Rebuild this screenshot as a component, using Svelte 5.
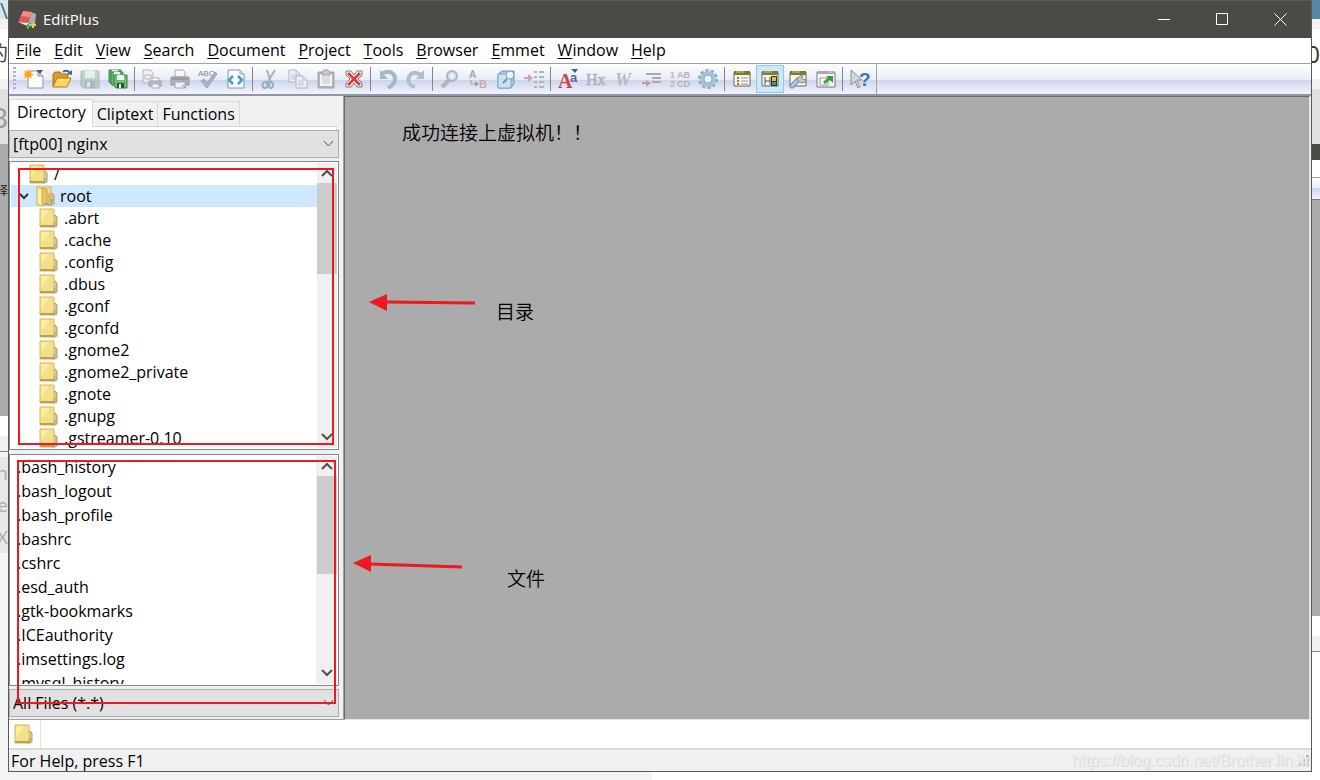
<style>
	:global(body) {
		margin: 0;
	}
	.desktop {
		display: grid;
		grid-template-columns: 8px 1fr 8px;
		grid-template-rows: 1fr 8px;
		height: 100vh;
		overflow: hidden;
		background: linear-gradient(to right, #f5f5f5 652px, #fff 652px);
		font-family: "Open Sans", "Noto Sans CJK SC", sans-serif;
		font-size: 16px;
		line-height: 20px;
		color: #000;
	}
	button,
	select {
		font: inherit;
		color: inherit;
		margin: 0;
		padding: 0;
		border: 0;
		background: transparent;
	}
	svg {
		display: block;
	}
	ul {
		list-style: none;
		margin: 0;
		padding: 0;
	}

	/* windows lying behind the editor */
	.behind {
		display: flex;
		flex-direction: column;
		overflow: hidden;
	}
	.behind div {
		display: flex;
		flex: none;
		align-items: center;
		justify-content: flex-end;
		box-sizing: border-box;
		overflow: hidden;
		white-space: nowrap;
	}

	.window {
		position: relative;
		display: flex;
		flex-direction: column;
		min-height: 0;
		border: 1px solid #5a5a58;
		overflow: hidden;
		background: #fff;
	}
	.titlebar {
		display: flex;
		align-items: center;
		height: 37px;
		padding: 0 2px 0 9px;
		background: #4b4a47;
		color: #fff;
	}
	.titlebar h1 {
		flex: 1;
		margin: 0 0 2px 5px;
		font-size: 15px;
		font-weight: 400;
	}
	.titlebar button {
		display: grid;
		place-items: center;
		width: 58px;
		height: 37px;
	}
	.menu {
		display: flex;
		align-items: center;
		gap: 1px;
		height: 23px;
		padding: 0 1px 2px;
		border-bottom: 1px solid #a0a0a0;
	}
	.menu button {
		padding: 0 6px;
	}
	.menu u {
		text-underline-offset: 2px;
	}
	.toolbar {
		display: flex;
		align-items: center;
		height: 30px;
		border-bottom: 2px solid #9294a5;
		background: linear-gradient(#fff, #e6ebf6 16px, #ced5ec 16px, #f1f3fd);
	}
	.toolbar button {
		display: grid;
		place-items: center;
		box-sizing: border-box;
		width: 28px;
		height: 28px;
	}
	.toolbar button.active {
		border: 1px solid #90c8f6;
		background: #cce8ff;
	}
	.grip {
		width: 3px;
		height: 24px;
		margin: 0 4px;
		background: repeating-linear-gradient(#b2b4bd 0 2px, transparent 2px 4px);
	}
	.sep {
		width: 1px;
		height: 24px;
		margin: 0 3px 0 2px;
		background: #84868f;
	}
	.end {
		align-self: stretch;
		width: 1px;
		margin-left: 2px;
		background: #a0a0a0;
	}

	.body {
		display: flex;
		flex: 1;
		min-height: 0;
		background: #f0f0f0;
	}
	.sidebar {
		display: flex;
		flex-direction: column;
		box-sizing: border-box;
		width: 335px;
		padding: 3px 4px 2px 0;
		border-right: 1px solid #a0a0a0;
		border-bottom: 1px solid #a0a0a0;
	}
	.tabs {
		display: flex;
		align-items: flex-end;
		height: 28px;
		margin-right: 2px;
		background: linear-gradient(#d9d9d9, #d9d9d9) bottom / 100% 1px no-repeat;
	}
	.tabs button {
		box-sizing: border-box;
		height: 26px;
		padding: 0 4px;
		border: 1px solid #d9d9d9;
		border-left: 0;
	}
	.tabs button.current {
		height: 28px;
		padding: 0 6px 4px 7px;
		border-left: 1px solid #d9d9d9;
		border-bottom: 0;
		background: #fff;
	}
	.pane-edge {
		height: 3px;
		margin-right: 2px;
		border-right: 1px solid #d9d9d9;
		background: #fff;
	}
	.combo {
		display: grid;
		flex: none;
		height: 28px;
	}
	.combo select,
	.combo svg {
		grid-area: 1 / 1;
	}
	.combo select {
		appearance: none;
		box-sizing: border-box;
		width: 100%;
		padding: 0 3px;
		border: 1px solid #adadad;
		background: #e1e1e1;
	}
	.combo svg {
		place-self: center end;
		margin-right: 5px;
		pointer-events: none;
	}
	.list {
		display: flex;
		min-height: 0;
		padding: 1px;
		border: 1px solid #828790;
		background: #fff;
		overflow: hidden;
	}
	.list ul {
		flex: 1;
		overflow: hidden;
	}
	.tree {
		flex: 5 1 0;
		margin: 3px 0 4px;
	}
	.files {
		flex: 4 1 0;
		margin-bottom: 3px;
	}
	.files ul {
		border-right: 1px solid #e5f1fb;
	}
	.tree button {
		display: flex;
		align-items: center;
		gap: 6px;
		width: 100%;
		height: 22px;
		padding-left: 27px;
	}
	.tree .top button {
		padding-left: 17px;
	}
	.tree .selected button {
		gap: 5px;
		padding-left: 7px;
		background: #cde8ff;
	}
	.files button {
		display: block;
		height: 24px;
		padding: 0 0 2px 6px;
	}
	.scroll {
		display: flex;
		flex-direction: column;
		flex: none;
		width: 20px;
		background: #f0f0f0;
	}
	.scroll svg {
		flex: none;
	}
	.track {
		flex: 1;
	}
	.thumb {
		background: #cdcdcd;
	}
	.workspace {
		flex: 1;
		margin-right: 1px;
		border: 1px solid #e3e3e3;
		border-top-color: #696969;
		border-left-color: #696969;
		background: #ababab;
	}
	.docs {
		display: flex;
		flex: none;
		height: 28px;
		border-bottom: 2px solid #d9d9d9;
	}
	.docs button {
		padding: 0 7px 0 4px;
		border-right: 1px solid #e3e3e3;
	}
	.status {
		display: flex;
		flex: none;
		align-items: center;
		justify-content: space-between;
		height: 21px;
		padding: 0 2px;
		background: #f0f0f0;
	}

	/* red markup drawn over the window */
	.box {
		position: absolute;
		box-sizing: border-box;
		border: 2px solid #ed1820;
		pointer-events: none;
	}
	.directories {
		left: 9px;
		top: 167px;
		width: 316px;
		height: 277px;
	}
	.filelist {
		left: 8px;
		top: 459px;
		width: 319px;
		height: 244px;
	}
	.arrow {
		position: absolute;
		pointer-events: none;
	}
	.note {
		position: absolute;
		margin: 0;
		font: 19px/28px "Noto Sans CJK SC", sans-serif;
		font-weight: 350;
		white-space: nowrap;
	}
	.watermark {
		position: absolute;
		left: 1063px;
		bottom: 0;
		font: 16px/20px "Liberation Sans", sans-serif;
		color: #ececec;
		text-shadow: 1px 1px 0 #d8d8d8;
		white-space: nowrap;
	}
</style>
<script>
	const menus = ["File", "Edit", "View", "Search", "Document", "Project", "Tools", "Browser", "Emmet", "Window", "Help"];
	const tabs = ["Directory", "Cliptext", "Functions"];
	const folders = [".abrt", ".cache", ".config", ".dbus", ".gconf", ".gconfd", ".gnome2", ".gnome2_private", ".gnote", ".gnupg", ".gstreamer-0.10"];
	const files = [".bash_history", ".bash_logout", ".bash_profile", ".bashrc", ".cshrc", ".esd_auth", ".gtk-bookmarks", ".ICEauthority", ".imsettings.log", ".mysql_history"];

	let tab = "Directory";
	let panel = "Directory window";

	const page = (x, y) => `<path d="M${x} ${y}h7l4 4v8h-11z" fill="#eef0f5" stroke="#b3b7c2"/><path d="M${x + 7} ${y}v4h4M${x + 2} ${y + 5}h6M${x + 2} ${y + 7}h6M${x + 2} ${y + 9}h6" fill="none" stroke="#b9c7d8"/>`;
	const frame = `<path d="M2 3h16v14H2z" fill="#f5f6ef" stroke="#6b6b4e"/><path d="M2 2h16v4H2z" fill="#7c7c34"/><path d="M4 3h8" stroke="#c6c67c"/>`;
	const greenDisk = (x, y) => `<path d="M${x} ${y}h12v13h-11l-1-1z" fill="#62b46a" stroke="#3b8c48"/><path d="M${x + 3} ${y}h6v5h-6z" fill="#e6f4e5"/>`;

	// every drawing fills a 20 by 20 box
	const tools = [
		["New", `<path d="M4 2h10l5 5v12H4z" fill="#fbfbfa" stroke="#98979a"/><path d="M14 2v5h5" fill="#dadada" stroke="#929292"/><path d="M12 1h7l-3 4z" fill="#405b84"/><path d="M4 0l1.2 2.5L8 1.500 7.200 4.200 10 5.500 7.200 6.800 8 9.500 5.200 8.300 4 11 2.800 8.300 0 9.500 1 6.800-1 5.500 1 4.200 0 1.500 2.800 2.500z" fill="#ffb52e"/><circle cx="4.500" cy="5.500" r="2.500" fill="#ff9b20"/>`],
		["Open", `<path d="M1 18V5l2-2h5l2 2h6v4" fill="#d99b27" stroke="#a4701a"/><path d="M1 18l4-9h14l-4 9z" fill="#ffd65c" stroke="#b47d1c"/><path d="M6 11h11" stroke="#fff0a5"/><path d="M11 3q4-3 7 1" fill="none" stroke="#4c6688" stroke-width="2"/><path d="M15 5l5 1V1z" fill="#4c6688"/>`],
		["Save", `<g opacity=".6"><path d="M1 2h18v17H3l-2-2z" fill="#a4bdb0" stroke="#879c96"/><path d="M5 2h10v7H5z" fill="#e4ece9"/><path d="M5 12h10v7H5z" fill="#889e98"/><path d="M7 13h3v5H7z" fill="#e8eeeb"/></g>`],
		["Save All", `${greenDisk(1, 1)}${greenDisk(3, 3)}<path d="M6 6h13v13H8l-2-2z" fill="#6cbd70" stroke="#3b8142"/><path d="M9 6h7v5H9z" fill="#edf8ea"/><path d="M9 14h7v5H9z" fill="#394e40"/><path d="M11 15h2v4h-2z" fill="#e9efe8"/>`],
		null,
		["Print Preview", `<g opacity=".8"><path d="M1 1h8l2 3v10H1z" fill="#eef0f5" stroke="#a8aab4"/><path d="M3 6h6v4H3z" fill="none" stroke="#a8aab4"/><path d="M10 9h7v4h-7z" fill="#fff" stroke="#a0a4b0"/><path d="M7 12h13v5H7z" fill="#b0b3bd" stroke="#969aa5"/><path d="M10 15h7v4h-7z" fill="#f7f8fb" stroke="#a0a4b0"/></g>`],
		["Print", `<path d="M5 1h8l2 2v5H5z" fill="#f6f7fa" stroke="#aaa"/><path d="M1 8h18v8H1z" fill="#b0b0b5" stroke="#96969d"/><path d="M2 10h16" stroke="#85858e"/><path d="M5 13h10v6H5z" fill="#eef1f5" stroke="#a8a8ad"/><path d="M12 16l4 3" stroke="#8c8c91"/>`],
		["Spell Check", `<text x="0" y="7" font-family="Liberation Sans" font-size="8" fill="#858792">ABC</text><path d="M3 12l3-2 3 4 8-11 2 2L9 19z" fill="#a8b2cb" stroke="#98a2ba"/>`],
		["View in Browser", `<path d="M2 1h12l4 4v14H2z" fill="#fbfcfe" stroke="#9194a0"/><path d="M14 1v4h4" fill="#ddd" stroke="#a9a9ae"/><path d="M7 7l-4 4 4 4M12 7l4 4-4 4" fill="none" stroke="#3c9be3" stroke-width="2.500"/>`],
		null,
		["Cut", `<g fill="none" stroke-width="2"><path d="M15 1L7 14M7 1l4 13" stroke="#a9b2bb"/><ellipse cx="5" cy="16" rx="2.500" ry="3" stroke="#93afca"/><ellipse cx="11" cy="16" rx="2" ry="3" stroke="#93afca"/></g>`],
		["Copy", page(1, 1) + page(8, 7)],
		["Paste", `<path d="M2 3h16v16H2z" fill="#b4b4b9" stroke="#a6a6ac"/><path d="M4 5h12v12H4z" fill="#f2f3f6"/><path d="M6 3l2-2h4l2 2v3H6z" fill="#c8cad0" stroke="#a0a2aa"/><path d="M6 8h8M6 10h8M6 12h8M6 14h8" stroke="#c6c8d0"/>`],
		["Delete", `<path d="M2 2h5l3 4 3-4h5v4l-4 4 4 4v4h-5l-3-4-3 4H2v-4l4-4-4-4z" fill="#fff" stroke="#8f7070"/><path d="M4 4l12 12M16 4L4 16" stroke="#d94141" stroke-width="3"/>`],
		null,
		["Undo", `<path d="M3 5q9-5 13 1c3 6-1 10-6 13" fill="none" stroke="#a3b7cb" stroke-width="4"/><path d="M2 1v9h8z" fill="#a3b7cb"/>`],
		["Redo", `<path d="M16 6Q6 1 3 8c-2 6 2 9 6 10" fill="none" stroke="#aebfca" stroke-width="4"/><path d="M18 1v9h-8z" fill="#aebfca"/>`],
		null,
		["Find", `<path d="M2 18l7-7" stroke="#b0b4bb" stroke-width="4"/><circle cx="12" cy="7" r="5" fill="#d7e0ef" stroke="#aab5c5" stroke-width="2"/><circle cx="12" cy="7" r="2" fill="#f4f7fc"/>`],
		["Replace", `<text x="1" y="9" font-family="Liberation Sans" font-size="10" font-weight="700" fill="#a5a7b2">A</text><text x="11" y="19" font-family="Liberation Sans" font-size="11" font-weight="700" fill="#c9abb0">B</text><path d="M3 11v4h6" fill="none" stroke="#9d9faa"/><path d="M7 12l4 3-4 3z" fill="#9d9faa"/>`],
		["Find in Files", `<path d="M2 5l4-3h12v13l-3 4H2z" fill="#a9c9e9" stroke="#6c94c3"/><path d="M2 5h13v14H2z" fill="#c8e0f5" stroke="#7ea7d1"/><path d="M7 14l4-4" stroke="#818d9d" stroke-width="2"/><circle cx="14" cy="6" r="4" fill="#e7f3fc" stroke="#8a9cae"/>`],
		["Go to Line", `<path d="M0 9h6" stroke="#d1a6aa" stroke-width="2"/><path d="M4 5l5 4-5 4z" fill="#d1a6aa"/><path d="M10 3h3M10 8h3M10 13h3M10 18h3M15 3h5M15 8h5M15 13h5M15 18h5" stroke="#b2b5bf" stroke-width="2"/>`],
		null,
		["Font", `<text x="0" y="19" font-family="Liberation Serif" font-size="20" font-weight="700" fill="#c44949">A</text><text x="12" y="13" font-family="Liberation Sans" font-size="13" font-weight="700" fill="#655db0">a</text><path d="M13 0h7l-3 4z" fill="#405b84"/>`],
		["Hex Viewer", `<text x="0" y="16" font-family="Liberation Serif" font-size="16" fill="#afb2bb" stroke="#afb2bb" stroke-width=".5">Hx</text>`],
		["Word Wrap", `<text x="1" y="17" font-family="Liberation Serif" font-size="18" font-style="italic" font-weight="700" fill="#b8bac3">W</text>`],
		["Auto Indent", `<path d="M4 5h15M10 9h9M10 13h9" stroke="#a7aab6" stroke-width="2"/><path d="M0 14h5" stroke="#c29ca5" stroke-width="2"/><path d="M4 11l5 3-5 4z" fill="#c29ca5"/>`],
		["Line Number", `<g font-family="Liberation Sans" font-size="9" font-weight="700"><text x="0" y="9" fill="#c8b1b4">1</text><text x="0" y="18" fill="#c8b1b4">2</text><text x="7" y="9" fill="#b0b3bc">AB</text><text x="7" y="18" fill="#b0b3bc">CD</text></g>`],
		["Preferences", `<circle cx="10" cy="10" r="8" fill="none" stroke="#8faabf" stroke-width="4" stroke-dasharray="3 2"/><circle cx="10" cy="10" r="6" fill="none" stroke="#a5c3d7" stroke-width="4"/><circle cx="10" cy="10" r="4" fill="#eff4fa" stroke="#8faabf"/>`],
		null,
		["Cliptext window", `${frame}<path d="M5 9h2M5 12h2M5 15h2" stroke="#cf5b42" stroke-width="2"/><path d="M9 9h7M9 12h7M9 15h7" stroke="#999"/>`],
		["Directory window", `${frame}<path d="M5 8v8M5 12h5M10 8v8" stroke="#4c535c" fill="none"/><path d="M11 7h6v10h-6z" fill="#333"/><path d="M12 8h4v4h-4z" fill="#e7bf1c"/><path d="M12 13h4v3h-4z" fill="#3897b8"/>`],
		["User tools", `${frame}<path d="M4 17l6-6" stroke="#678fbd" stroke-width="5" stroke-linecap="round"/><path d="M4 17l6-6" stroke="#a5c9ed" stroke-width="3" stroke-linecap="round"/><path d="M9 10l4-4 2 1-1 2 2 2 2-1v3l-4 1-3-1z" fill="#c4c5c6" stroke="#87888c"/>`],
		["Full Screen", `<path d="M1 3h18v15H1z" fill="#f6f6f6" stroke="#777"/><path d="M1 2h18v3H1z" fill="#aaa"/><path d="M13 3h5" stroke="#eee" stroke-dasharray="1 1"/><path d="M4 9h8v7H4z" fill="#fff" stroke="#999"/><path d="M8 14l6-5" stroke="#3fa048" stroke-width="3"/><path d="M10 7h7v7z" fill="#2f9a3f"/>`],
		null,
		["Context Help", `<path d="M1 1v15l4-4 3 7 2-1-3-7h5z" fill="#d4d6de" stroke="#8d909b"/><text x="9" y="17" font-family="Liberation Sans" font-size="19" font-weight="700" fill="#3c73c4">?</text>`],
	];

	const left = [
		[19, "#d9e6ec", "\\", "#397793", 22],
		[10, "#f2f2f2"],
		[50, "#fff", "的", "#444", 20],
		[10, "#f2f2f2"],
		[55, "#e1e1e1", "B", "#999", 28],
		[94, "#ababab", "选择", "#222", 12],
		[178, "#ababab"],
		[20, "#fff"],
		[15, "#f0f0f0"],
		[1, "#828790"],
		[5, "#f5f5f5"],
		[32, "#e8e8e8", "n", "#aaa", 19],
		[32, "#e8e8e8", "e", "#aaa", 19],
		[32, "#e8e8e8", "X", "#aaa", 19],
	];
	const right = [
		[19, "#5588a6"],
		[10, "#f2f2f2"],
		[50, "#fff", "0", "#333", 24],
		[10, "#f2f2f2"],
		[55, "#e1e1e1"],
		[16, "#4b4a47"],
		[17, "#fff"],
		[1, "#a0a0a0"],
		[21, "linear-gradient(#fff, #e6ebf6 50%, #ced5ec 50%, #f1f3fd)"],
		[1, "#77798a"],
		[416, "#ababab"],
		[20, "#fff"],
		[15, "#f0f0f0"],
		[1, "#828790"],
		[120, "#fff"],
	];
</script>

{#snippet strip(blocks)}
	{#each blocks as [height, background, text, color, size]}
		<div style="height: {height}px; background: {background}; color: {color}; font-size: {size}px">{text || ""}</div>
	{/each}
{/snippet}

{#snippet folder(open)}
	<svg width="20" height="20" viewBox="0 0 20 20" aria-hidden="true">
		<path d="M14 7h3l2 2v9l-2 1h-3z" fill="#d8c28b" stroke="#ae9c70" />
		<path d="M16 9v8" stroke="#fff6d0" />
		<path d="M16 14h1v4h-1z" fill="#42a5d8" />
		<path d="M2 1h14v18H2z" fill="#f4e08a" stroke="#d5b65f" />
		<path d="M2 18h14" stroke="#c39c4d" stroke-width="2" />
		<path d="M3 2h8L3 13z" fill="#fbef9d" />
		{#if open}
			<path d="M7 2l5 1v14l-5 2z" fill="#e6c763" stroke="#c9a04a" />
			<path d="M2 1l5 2v17l-5-2z" fill="#fff0a3" stroke="#d5b65f" />
			<path d="M13 7h4v11h-4z" fill="#d7ba6d" />
			<path d="M16 13h1v4h-1z" fill="#42a5d8" />
		{/if}
	</svg>
{/snippet}

{#snippet scrollbar(thumb, rest)}
	<div class="scroll">
		<svg width="20" height="20" viewBox="0 0 20 20"><path d="M5 13l5-5 5 5" fill="none" stroke="#505050" stroke-width="2" /></svg>
		<div class="thumb" style="flex: {thumb} 1 0"></div>
		<div class="track" style="flex: {rest} 1 0"></div>
		<svg width="20" height="20" viewBox="0 0 20 20"><path d="M5 6l5 5 5-5" fill="none" stroke="#505050" stroke-width="2" /></svg>
	</div>
{/snippet}

{#snippet chevron()}
	<svg width="11" height="8" viewBox="0 0 11 8"><path d="M1 1l4.500 5L10 1" fill="none" stroke="#555" /></svg>
{/snippet}

<div class="desktop">
	<div class="behind" aria-hidden="true">{@render strip(left)}</div>

	<main class="window">
		<header class="titlebar">
			<svg width="20" height="20" viewBox="0 0 20 20" aria-hidden="true">
				<path d="M13 2l5 2-1 11-7-2z" fill="#a9adb0" />
				<path d="M5 1l9 1-4 11-10-1z" fill="#df5b5b" />
				<path d="M5 1l9 1-2 5-9-1z" fill="#f08a85" />
				<path d="M0 12l10 1 5 3-8-1z" fill="#eeeeeb" />
				<path d="M10 14v5M8 16h5" stroke="#45bc4b" stroke-width="2" />
				<path d="M15 13v5M13 15h5" stroke="#f0d72e" stroke-width="2" />
			</svg>
			<h1>EditPlus</h1>
			<button aria-label="Minimize"><svg width="13" height="13"><path d="M0 6.500h12" stroke="#fff" /></svg></button>
			<button aria-label="Maximize"><svg width="13" height="13"><path d="M.5.5h11v11H.5z" fill="none" stroke="#fff" /></svg></button>
			<button aria-label="Close"><svg width="13" height="13"><path d="M.5.5l12 12M12.500.5l-12 12" stroke="#fff" /></svg></button>
		</header>

		<nav class="menu">
			{#each menus as name}
				<button><u>{name[0]}</u>{name.slice(1)}</button>
			{/each}
		</nav>

		<div class="toolbar">
			<span class="grip"></span>
			{#each tools as tool}
				{#if tool}
					<button aria-label={tool[0]} class:active={tool[0] === panel}>
						<svg width="20" height="20" viewBox="0 0 20 20">{@html tool[1]}</svg>
					</button>
				{:else}
					<span class="sep"></span>
				{/if}
			{/each}
			<span class="end"></span>
		</div>

		<div class="body">
			<aside class="sidebar">
				<div class="tabs">
					{#each tabs as name}
						<button class:current={name === tab} on:click={() => { tab = name; }}>{name}</button>
					{/each}
				</div>
				<div class="pane-edge"></div>
				<div class="combo">
					<select aria-label="Drive"><option>[ftp00] nginx</option></select>
					{@render chevron()}
				</div>
				<div class="list tree">
					<ul>
						<li class="top"><button>{@render folder(false)}/</button></li>
						<li class="selected">
							<button>
								<svg width="12" height="10" viewBox="0 0 12 10"><path d="M2 3l4 4 4-4" fill="none" stroke="#333" stroke-width="2" /></svg>
								{@render folder(true)}root
							</button>
						</li>
						{#each folders as name}
							<li><button>{@render folder(false)}{name}</button></li>
						{/each}
					</ul>
					{@render scrollbar(91, 154)}
				</div>
				<div class="list files">
					<ul>
						{#each files as name}
							<li><button>{name}</button></li>
						{/each}
					</ul>
					{@render scrollbar(98, 90)}
				</div>
				<div class="combo">
					<select aria-label="File filter"><option>All Files (*.*)</option></select>
					{@render chevron()}
				</div>
			</aside>
			<section class="workspace"></section>
		</div>

		<div class="docs"><button aria-label="Open directory">{@render folder(false)}</button></div>
		<footer class="status">
			<span>For Help, press F1</span>
			<svg width="12" height="12"><path d="M9 0h3v3H9zM5 4h3v3H5zM9 4h3v3H9zM1 8h3v3H1zM5 8h3v3H5zM9 8h3v3H9z" fill="#b8b8b8" /></svg>
		</footer>

		<div class="box directories"></div>
		<div class="box filelist"></div>
		<svg class="arrow" style="left: 360px; top: 291px" width="108" height="20"><path d="M17 10l89 1" stroke="#ed1820" stroke-width="3" /><path d="M0 10L18 2v17z" fill="#ed1820" /></svg>
		<svg class="arrow" style="left: 344px; top: 552px" width="111" height="20"><path d="M17 11l92 3" stroke="#ed1820" stroke-width="3" /><path d="M0 10L18 2v17z" fill="#ed1820" /></svg>
		<p class="note" style="left: 393px; top: 117px">成功连接上虚拟机！！</p>
		<p class="note" style="left: 487px; top: 296px">目录</p>
		<p class="note" style="left: 498px; top: 563px">文件</p>
		<span class="watermark">https://blog.csdn.net/BrotherJinJin</span>
	</main>

	<div class="behind" aria-hidden="true">{@render strip(right)}</div>
</div>
